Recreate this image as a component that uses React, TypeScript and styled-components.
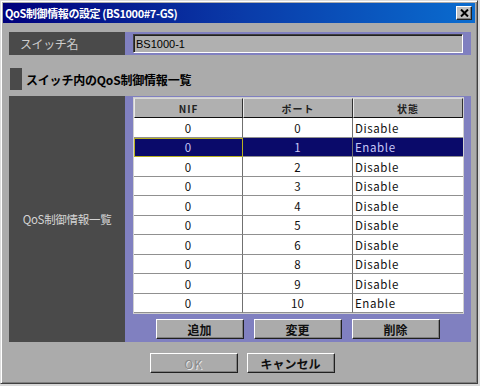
import React from "react";
import styled, { createGlobalStyle } from "styled-components";

const GlobalStyle = createGlobalStyle`
  html, body { margin: 0; padding: 0; background: #d8d8d8; }
  body { font-family: "Noto Sans CJK JP", "Noto Sans", sans-serif; }
  * { box-sizing: border-box; }
`;

const Window = styled.div`
  width: 478px;
  height: 384px;
  background: #ababab;
  border-top: 1px solid #dcdcdc;
  border-left: 1px solid #dcdcdc;
  border-right: 1px solid #404040;
  border-bottom: 1px solid #404040;
  box-shadow: inset 1px 1px 0 #ffffff, inset -1px -1px 0 #808080;
  padding: 2px;
  display: flex;
  flex-direction: column;
`;

const TitleBar = styled.div`
  height: 20px;
  display: flex;
  align-items: center;
  justify-content: space-between;
  padding: 0 3px 0 2px;
  background: linear-gradient(90deg, #00007c 0%, #0a3aa8 50%, #0a6ccf 100%);
`;

const TitleText = styled.span`
  color: #ffffff;
  font-size: 11px;
  font-weight: 700;
  letter-spacing: -0.4px;
  line-height: 20px;
`;

const CloseButton = styled.div`
  width: 16px;
  height: 14px;
  background: #c0c0c0;
  border-top: 1px solid #ffffff;
  border-left: 1px solid #ffffff;
  border-right: 1px solid #202020;
  border-bottom: 1px solid #202020;
  box-shadow: inset -1px -1px 0 #808080;
  display: flex;
  align-items: center;
  justify-content: center;
`;

const Content = styled.div`
  flex: 1;
  display: flex;
  flex-direction: column;
  padding: 9px 4px 0 6px;
`;

const NameRow = styled.div`
  height: 23px;
  display: flex;
`;

const DarkLabel = styled.div`
  width: 116px;
  background: #4a4a4a;
  color: #cdcdcd;
  font-size: 12px;
  letter-spacing: -0.4px;
  display: flex;
  align-items: center;
  padding-left: 11px;
`;

const PurpleField = styled.div`
  flex: 1;
  background: #8080c0;
  padding: 2px 8px;
`;

const TextInput = styled.div`
  height: 19px;
  background: #b0b0b0;
  border-top: 1px solid #404040;
  border-left: 1px solid #404040;
  border-right: 1px solid #ffffff;
  border-bottom: 1px solid #ffffff;
  box-shadow: inset 1px 1px 0 #202020;
  font-family: "Liberation Sans", sans-serif;
  font-size: 11px;
  color: #000;
  padding-left: 2px;
  display: flex;
  align-items: center;
`;

const SectionHeader = styled.div`
  margin-top: 13px;
  height: 22px;
  display: flex;
  align-items: center;
  gap: 4px;
  padding-left: 1px;
`;

const SectionMark = styled.div`
  width: 12px;
  height: 22px;
  background: #4a4a4a;
`;

const SectionTitle = styled.span`
  font-size: 12px;
  font-weight: 700;
  color: #000;
  letter-spacing: -0.2px;
`;

const MainRow = styled.div`
  margin-top: 6px;
  height: 246px;
  display: flex;
`;

const SideLabel = styled.div`
  width: 116px;
  background: #4a4a4a;
  color: #d4d4d4;
  font-size: 11.5px;
  letter-spacing: -0.3px;
  display: flex;
  align-items: center;
  justify-content: center;
`;

const PurplePanel = styled.div`
  flex: 1;
  background: #8080c0;
  padding: 1px 7px 2px 8px;
  display: flex;
  flex-direction: column;
`;

const TableFrame = styled.div`
  width: 331px;
  border: 1px solid #d0d0d0;
  background: #ffffff;
  display: grid;
  grid-template-columns: 109px 110px 110px;
`;

const HeaderCell = styled.div`
  height: 20px;
  background: #b0b0b0;
  border-top: 1px solid #d8d8d8;
  border-left: 1px solid #e8e8e8;
  border-right: 1px solid #303030;
  border-bottom: 1px solid #101010;
  font-size: 10px;
  font-weight: 700;
  color: #202020;
  display: flex;
  align-items: center;
  justify-content: center;
  letter-spacing: 1px;
`;

const Cell = styled.div<{ $h: number; $sel: boolean; $last: boolean; $left: boolean; $focus: boolean }>`
  height: ${(p) => p.$h}px;
  background: ${(p) => (p.$sel ? "#0a0a6a" : "#ffffff")};
  color: ${(p) => (p.$sel ? "#c8c8f8" : "#101010")};
  border-bottom: 1px solid #909090;
  border-right: ${(p) => (p.$last ? "none" : "1px solid #707070")};
  outline: ${(p) => (p.$focus ? "1px solid #b8b020" : "none")};
  outline-offset: -1px;
  font-family: "Noto Sans CJK JP", sans-serif;
  font-size: 11.5px;
  display: flex;
  align-items: center;
  justify-content: ${(p) => (p.$left ? "flex-start" : "center")};
  padding-left: ${(p) => (p.$left ? "2px" : "0")};
  letter-spacing: ${(p) => (p.$left ? "0.6px" : "0")};
`;

const PanelButtons = styled.div`
  margin-top: 5px;
  display: flex;
  justify-content: center;
  gap: 10px;
  padding-right: 2px;
`;

const Button = styled.div<{ $disabled?: boolean }>`
  width: 88px;
  height: 20px;
  background: #ababab;
  border-top: 1px solid #ffffff;
  border-left: 1px solid #ffffff;
  border-right: 1px solid #202020;
  border-bottom: 1px solid #202020;
  box-shadow: inset -1px -1px 0 #808080;
  font-size: 12px;
  font-weight: ${(p) => (p.$disabled ? 400 : 700)};
  color: ${(p) => (p.$disabled ? "#8a8a8a" : "#101010")};
  text-shadow: ${(p) => (p.$disabled ? "1px 1px 0 #e8e8e8" : "none")};
  display: flex;
  align-items: center;
  justify-content: center;
  letter-spacing: ${(p) => (p.$disabled ? "1px" : "0")};
`;

const DialogButtons = styled.div`
  margin-top: 11px;
  display: flex;
  justify-content: center;
  gap: 9px;
  padding-left: 4px;
`;

const rows: [string, string, string][] = [
  ["0", "0", "Disable"],
  ["0", "1", "Enable"],
  ["0", "2", "Disable"],
  ["0", "3", "Disable"],
  ["0", "4", "Disable"],
  ["0", "5", "Disable"],
  ["0", "6", "Disable"],
  ["0", "8", "Disable"],
  ["0", "9", "Disable"],
  ["0", "10", "Enable"],
];

export default function App() {
  return (
    <>
      <GlobalStyle />
      <Window>
        <TitleBar>
          <TitleText>QoS制御情報の設定 (BS1000#7-GS)</TitleText>
          <CloseButton>
            <svg width="9" height="8" viewBox="0 0 9 8">
              <path d="M1 0.5 L8 7.5 M8 0.5 L1 7.5" stroke="#000" strokeWidth="2" />
            </svg>
          </CloseButton>
        </TitleBar>
        <Content>
          <NameRow>
            <DarkLabel>スイッチ名</DarkLabel>
            <PurpleField>
              <TextInput>BS1000-1</TextInput>
            </PurpleField>
          </NameRow>
          <SectionHeader>
            <SectionMark />
            <SectionTitle>スイッチ内のQoS制御情報一覧</SectionTitle>
          </SectionHeader>
          <MainRow>
            <SideLabel>QoS制御情報一覧</SideLabel>
            <PurplePanel>
              <TableFrame>
                <HeaderCell>NIF</HeaderCell>
                <HeaderCell>ポート</HeaderCell>
                <HeaderCell>状態</HeaderCell>
                {rows.map((r, i) =>
                  r.map((v, j) => (
                    <Cell
                      key={`${i}-${j}`}
                      $h={i % 2 === 0 ? 20 : 19}
                      $sel={i === 1}
                      $focus={i === 1 && j === 0}
                      $last={j === 2}
                      $left={j === 2}
                    >
                      {v}
                    </Cell>
                  ))
                )}
              </TableFrame>
              <PanelButtons>
                <Button>追加</Button>
                <Button>変更</Button>
                <Button>削除</Button>
              </PanelButtons>
            </PurplePanel>
          </MainRow>
          <DialogButtons>
            <Button $disabled>OK</Button>
            <Button>キャンセル</Button>
          </DialogButtons>
        </Content>
      </Window>
    </>
  );
}
